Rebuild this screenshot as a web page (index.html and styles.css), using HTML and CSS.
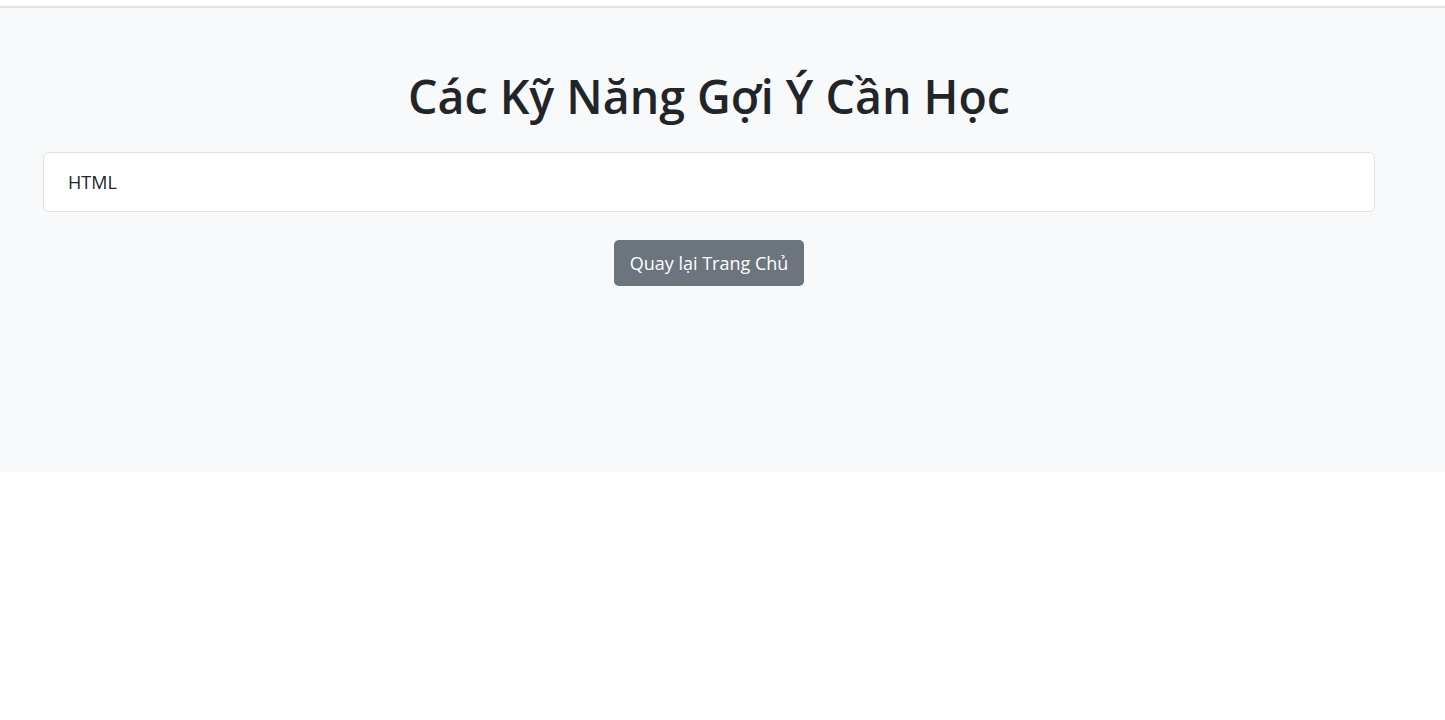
FILE: index.html
```html
<!DOCTYPE html>
<html lang="vi">
<head>
<meta charset="utf-8">
<title>Các Kỹ Năng Gợi Ý Cần Học</title>
<link rel="stylesheet" href="styles.css">
</head>
<body>
<header class="topbar"></header>
<main class="section">
  <div class="inner">
    <h1 class="title">Các Kỹ Năng Gợi Ý Cần Học</h1>
    <ul class="list">
      <li class="list-item">HTML</li>
    </ul>
    <div class="actions">
      <a class="btn" href="#">Quay lại Trang Chủ</a>
    </div>
  </div>
</main>
</body>
</html>
```
FILE: styles.css
```css
* { box-sizing: border-box; }
html, body { margin: 0; padding: 0; background: #fff; }
body {
  font-family: "Open Sans", "Noto Sans", sans-serif;
  color: #212529;
}
.topbar {
  height: 8px;
  border-bottom: 2px solid #e2e4e2;
  background: #fff;
}
.section {
  background: #f8f9fa;
  height: 464px;
  padding: 0 27px 0 0;
}
.inner {
  padding: 60px 43px 0;
}
.title {
  margin: 0 0 28px;
  text-align: center;
  font-size: 46.5px;
  font-weight: 600;
  line-height: 56px;
  color: #212529;
}
.list {
  list-style: none;
  margin: 0;
  padding: 0;
}
.list-item {
  background: #fff;
  border: 1px solid #dfe1e3;
  border-radius: 6px;
  height: 60px;
  padding: 0 24px;
  display: flex;
  align-items: center;
  font-size: 18px;
  color: #212529;
}
.actions {
  display: flex;
  justify-content: center;
  margin-top: 28px;
}
.btn {
  display: inline-block;
  background: #6c757d;
  color: #fff;
  text-decoration: none;
  font-size: 18px;
  line-height: 30px;
  padding: 8px 16px;
  border-radius: 5px;
}
```
